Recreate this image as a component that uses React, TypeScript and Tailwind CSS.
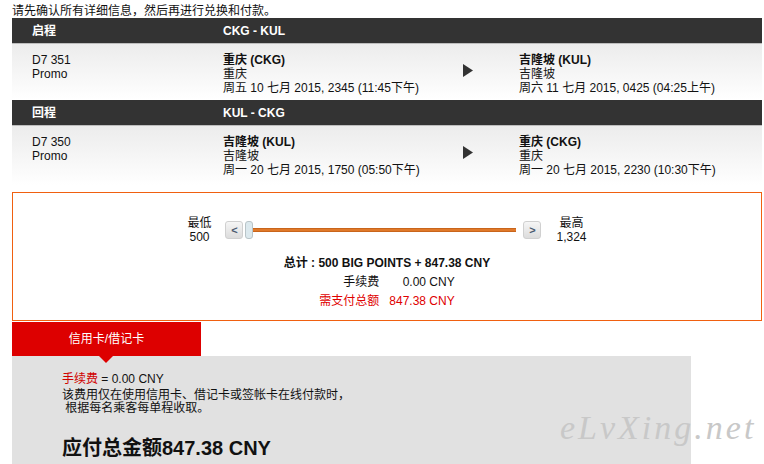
import { Fragment } from 'react';

const font = "font-['Liberation_Sans','Noto_Sans_CJK_SC',sans-serif]";

type Stop = { city: string; sub: string; time: string };

const legs: { label: string; route: string; flight: string; from: Stop; to: Stop }[] = [
  {
    label: '启程',
    route: 'CKG - KUL',
    flight: 'D7 351',
    from: { city: '重庆 (CKG)', sub: '重庆', time: '周五 10 七月 2015, 2345 (11:45下午)' },
    to: { city: '吉隆坡 (KUL)', sub: '吉隆坡', time: '周六 11 七月 2015, 0425 (04:25上午)' },
  },
  {
    label: '回程',
    route: 'KUL - CKG',
    flight: 'D7 350',
    from: { city: '吉隆坡 (KUL)', sub: '吉隆坡', time: '周一 20 七月 2015, 1750 (05:50下午)' },
    to: { city: '重庆 (CKG)', sub: '重庆', time: '周一 20 七月 2015, 2230 (10:30下午)' },
  },
];

function StopCell({ stop }: { stop: Stop }) {
  return (
    <div>
      <div className="font-bold">{stop.city}</div>
      <div>{stop.sub}</div>
      <div>{stop.time}</div>
    </div>
  );
}

function SliderButton({ dir }: { dir: '<' | '>' }) {
  return (
    <div className="w-[18px] h-[18px] rounded-[3px] border border-[#d0d0d0] bg-linear-to-b from-[#f6f6f6] to-[#dcdcdc] flex items-center justify-center text-[11px] font-bold text-[#4a5a70] leading-none">
      {dir}
    </div>
  );
}

export default function App() {
  return (
    <div className={`${font} relative w-[764px] h-[464px] overflow-hidden bg-white text-[12px] leading-[14px] text-[#111]`}>
      <div className="pl-[12px] pt-[4px]">
        <p className="h-[14px]">请先确认所有详细信息，然后再进行兑换和付款。</p>

        <div className="w-[750px]">
          {legs.map((leg, i) => (
            <Fragment key={leg.flight}>
              <div className="h-[26px] bg-[#333] border-b border-[#bdbdbd] flex items-center text-white font-bold">
                <div className="w-[211px] pl-[20px]">{leg.label}</div>
                <div>{leg.route}</div>
              </div>
              <div
                className={`flex pl-[20px] pt-[9px] bg-linear-to-b from-[#ececec] to-white ${
                  i === 0 ? 'h-[56px]' : 'h-[59px]'
                }`}
              >
                <div className="w-[191px]">
                  <div>{leg.flight}</div>
                  <div>Promo</div>
                </div>
                <div className="w-[240px]">
                  <StopCell stop={leg.from} />
                </div>
                <div className="w-[56px] flex items-start pt-[11px]">
                  <svg width="10" height="13" viewBox="0 0 10 13">
                    <polygon points="0,0 10,6.5 0,13" fill="#333" />
                  </svg>
                </div>
                <StopCell stop={leg.to} />
              </div>
            </Fragment>
          ))}
        </div>

        {/* 积分滑块 */}
        <div className="mt-[7px] w-[750px] h-[129px] border border-[#f06010] pt-[23px]">
          <div className="flex items-center justify-center">
            <div className="text-center mr-[14px]">
              <div>最低</div>
              <div>500</div>
            </div>
            <SliderButton dir="<" />
            <div className="w-[8px] h-[18px] ml-[2px] rounded-[3px] border border-[#b9c4c8] bg-[#dce9ee]" />
            <div className="w-[263px] h-[4px] bg-[#e0792a] border-y border-[#c9651c]" />
            <div className="ml-[7px]">
              <SliderButton dir=">" />
            </div>
            <div className="text-center ml-[15px]">
              <div>最高</div>
              <div>1,324</div>
            </div>
          </div>

          <div className="mt-[10px] leading-[19px] text-center">
            <div className="font-bold">总计 : 500 BIG POINTS + 847.38 CNY</div>
            <div className="flex justify-center">
              <div className="grid grid-cols-[auto_auto] gap-x-[10px]">
                <div className="text-right">手续费</div>
                <div className="text-right">0.00 CNY</div>
                <div className="text-right text-[#e00000]">需支付总额</div>
                <div className="text-right text-[#e00000]">847.38 CNY</div>
              </div>
            </div>
          </div>
        </div>

        {/* 付款方式 */}
        <div className="mt-[1px] w-[189px] h-[34px] bg-[#dd0000] text-white flex items-center justify-center">
          信用卡/借记卡
        </div>
        <div className="relative w-[679px] h-[120px] bg-[#e1e1e1] pl-[50px] pt-[16px]">
          <svg className="absolute left-[87px] top-0" width="14" height="7" viewBox="0 0 14 7">
            <polygon points="0,0 14,0 7,7" fill="#dd0000" />
          </svg>
          <div>
            <span className="text-[#d00000]">手续费</span> = 0.00 CNY
          </div>
          <div className="mt-[3px] leading-[13px]">
            <div>该费用仅在使用信用卡、借记卡或签帐卡在线付款时，</div>
            <div>&nbsp;根据每名乘客每单程收取。</div>
          </div>
          <div className="mt-[21px] text-[20px] leading-[24px] font-bold">应付总金额847.38 CNY</div>
        </div>
      </div>

      <div className="absolute left-[560px] top-[408px] font-['Liberation_Serif',serif] italic text-[34px] leading-[40px] tracking-[3px] text-[#c8c8c8]">
        eLvXing.net
      </div>
    </div>
  );
}
